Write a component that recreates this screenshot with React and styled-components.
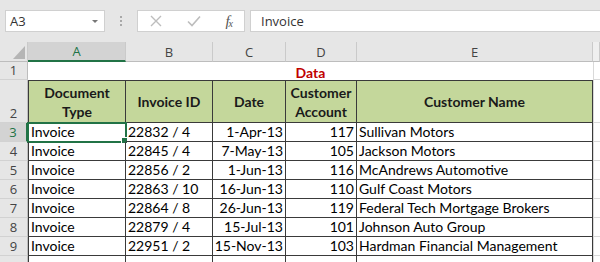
import React from "react";
import styled, { createGlobalStyle } from "styled-components";

const GlobalStyle = createGlobalStyle`
  html, body {
    margin: 0;
    padding: 0;
    background: #ffffff;
  }
  body {
    font-family: "Lato", "Liberation Sans", sans-serif;
  }
`;

const columns = ["A", "B", "C", "D", "E"];

const rows = [
  { n: 3, type: "Invoice", id: "22832 / 4", date: "1-Apr-13", acct: 117, name: "Sullivan Motors" },
  { n: 4, type: "Invoice", id: "22845 / 4", date: "7-May-13", acct: 105, name: "Jackson Motors" },
  { n: 5, type: "Invoice", id: "22856 / 2", date: "1-Jun-13", acct: 116, name: "McAndrews Automotive" },
  { n: 6, type: "Invoice", id: "22863 / 10", date: "16-Jun-13", acct: 110, name: "Gulf Coast Motors" },
  { n: 7, type: "Invoice", id: "22864 / 8", date: "26-Jun-13", acct: 119, name: "Federal Tech Mortgage Brokers" },
  { n: 8, type: "Invoice", id: "22879 / 4", date: "15-Jul-13", acct: 101, name: "Johnson Auto Group" },
  { n: 9, type: "Invoice", id: "22951 / 2", date: "15-Nov-13", acct: 103, name: "Hardman Financial Management" },
];

const App = () => {
  return (
    <>
      <GlobalStyle />
      <Window>
        <FormulaBar>
          <NameBox>
            <span>A3</span>
            <DropArrow />
          </NameBox>
          <Grip>
            <i />
            <i />
            <i />
          </Grip>
          <FxButtons>
            <svg width="12" height="12" viewBox="0 0 12 12">
              <path d="M1 1 L11 11 M11 1 L1 11" stroke="#bdbdbd" strokeWidth="1.4" fill="none" />
            </svg>
            <svg width="14" height="12" viewBox="0 0 14 12">
              <path d="M1 6.5 L5 10.5 L13 1.5" stroke="#bdbdbd" strokeWidth="1.6" fill="none" />
            </svg>
            <FxLabel>
              f<sub>x</sub>
            </FxLabel>
          </FxButtons>
          <FormulaInput>Invoice</FormulaInput>
        </FormulaBar>

        <Sheet>
          <Corner>
            <svg width="12" height="13" viewBox="0 0 12 13">
              <path d="M12 0 L12 13 L0 13 Z" fill="#b5b5b5" />
            </svg>
          </Corner>
          {columns.map((c) => (
            <ColHead key={c} $active={c === "A"}>{c}</ColHead>
          ))}
          <ColHead $faint />

          <RowHead>1</RowHead>
          <TitleCell>Data</TitleCell>
          <BlankCell />

          <RowHead>2</RowHead>
          <HeadCell $first>Document<br />Type</HeadCell>
          <HeadCell>Invoice ID</HeadCell>
          <HeadCell>Date</HeadCell>
          <HeadCell>Customer<br />Account</HeadCell>
          <HeadCell>Customer Name</HeadCell>
          <BlankCell />

          {rows.map((r) => (
            <React.Fragment key={r.n}>
              <RowHead $active={r.n === 3}>{r.n}</RowHead>
              <Cell $first $selected={r.n === 3}>
                {r.type}
                {r.n === 3 && <FillHandle />}
              </Cell>
              <Cell>{r.id}</Cell>
              <Cell $right>{r.date}</Cell>
              <Cell $right>{r.acct}</Cell>
              <Cell>{r.name}</Cell>
              <BlankCell />
            </React.Fragment>
          ))}

          {/* row 10 is only a sliver at the bottom edge */}
          <RowHead />
          <Cell $first />
          <Cell />
          <Cell />
          <Cell />
          <Cell />
          <BlankCell />
        </Sheet>
      </Window>
    </>
  );
};

export default App;

const Window = styled.div`
  width: 600px;
  height: 262px;
  overflow: hidden;
  background: #ffffff;
`;

const FormulaBar = styled.div`
  height: 42px;
  box-sizing: border-box;
  padding: 10px 0 10px 5px;
  background: #e6e6e6;
  display: flex;
  align-items: stretch;
`;

const NameBox = styled.div`
  width: 100px;
  box-sizing: border-box;
  background: #ffffff;
  border: 1px solid #d0d0d0;
  display: flex;
  align-items: center;
  justify-content: space-between;
  padding: 0 6px 0 4px;
  font-family: "Open Sans", "Liberation Sans", sans-serif;
  font-size: 13px;
  color: #333333;
`;

const DropArrow = styled.span`
  width: 0;
  height: 0;
  border-left: 3px solid transparent;
  border-right: 3px solid transparent;
  border-top: 3px solid #777777;
`;

const Grip = styled.div`
  width: 32px;
  display: flex;
  flex-direction: column;
  align-items: center;
  justify-content: center;
  gap: 2px;

  i {
    width: 2px;
    height: 2px;
    background: #a8a8a8;
  }
`;

const FxButtons = styled.div`
  width: 108px;
  box-sizing: border-box;
  background: #ffffff;
  border: 1px solid #d0d0d0;
  display: flex;
  align-items: center;
  justify-content: space-between;
  padding: 0 12px 0 12px;
`;

const FxLabel = styled.span`
  font-family: "Liberation Serif", serif;
  font-style: italic;
  font-size: 15px;
  color: #555555;
  letter-spacing: -1px;

  sub {
    font-size: 10px;
    vertical-align: -1px;
  }
`;

const FormulaInput = styled.div`
  flex: 1;
  margin-left: 5px;
  background: #ffffff;
  border: 1px solid #d0d0d0;
  border-right: none;
  display: flex;
  align-items: center;
  padding-left: 10px;
  font-family: "Open Sans", "Liberation Sans", sans-serif;
  font-size: 13px;
  color: #333333;
`;

const Sheet = styled.div`
  display: grid;
  grid-template-columns: 28px 98px 87px 73px 71px 236px 7px;
  grid-template-rows: 20px 18px 43px repeat(8, 19px);
  font-family: "Lato", "Liberation Sans", sans-serif;
  font-size: 14px;
  color: #000000;
`;

const Corner = styled.div`
  background: #e6e6e6;
  border-right: 1px solid #cacaca;
  border-bottom: 1px solid #bdbdbd;
  box-sizing: border-box;
  display: flex;
  align-items: flex-end;
  justify-content: flex-end;
  padding: 0 2px 2px 0;
`;

const ColHead = styled.div`
  box-sizing: border-box;
  background: ${({ $active, $faint }) => ($active ? "#d3d3d3" : $faint ? "#efefef" : "#e6e6e6")};
  color: ${({ $active }) => ($active ? "#217346" : "#444444")};
  border-right: 1px solid #cacaca;
  border-bottom: ${({ $active }) => ($active ? "2px solid #217346" : "1px solid #bdbdbd")};
  display: flex;
  align-items: center;
  justify-content: center;
  font-family: "Open Sans", "Liberation Sans", sans-serif;
  font-size: 13px;
`;

const RowHead = styled.div`
  box-sizing: border-box;
  background: ${({ $active }) => ($active ? "#d3d3d3" : "#e6e6e6")};
  color: ${({ $active }) => ($active ? "#217346" : "#444444")};
  border-right: ${({ $active }) => ($active ? "2px solid #217346" : "1px solid #bdbdbd")};
  border-bottom: 1px solid #d2d2d2;
  display: flex;
  align-items: flex-end;
  justify-content: center;
  font-family: "Open Sans", "Liberation Sans", sans-serif;
  font-size: 13px;
  line-height: 18px;
`;

const TitleCell = styled.div`
  grid-column: span 5;
  display: flex;
  align-items: center;
  justify-content: center;
  color: #c00000;
  font-weight: 700;
  padding-top: 2px;
`;

const BlankCell = styled.div`
  box-sizing: border-box;
  border-left: 1px solid #d9d9d9;
  border-bottom: 1px solid #d9d9d9;
`;

const HeadCell = styled.div`
  box-sizing: border-box;
  background: #c4d79b;
  border-top: 1px solid #3a3a3a;
  border-right: 1px solid #3a3a3a;
  border-bottom: 1px solid #3a3a3a;
  border-left: ${({ $first }) => ($first ? "1px solid #3a3a3a" : "none")};
  display: flex;
  align-items: center;
  justify-content: center;
  text-align: center;
  font-weight: 700;
  line-height: 19px;
  color: #1a1a1a;
`;

const Cell = styled.div`
  position: relative;
  box-sizing: border-box;
  border-right: 1px solid #3a3a3a;
  border-bottom: 1px solid #3a3a3a;
  border-left: ${({ $first }) => ($first ? "1px solid #3a3a3a" : "none")};
  outline: ${({ $selected }) => ($selected ? "2px solid #217346" : "none")};
  outline-offset: -1px;
  display: flex;
  align-items: center;
  justify-content: ${({ $right }) => ($right ? "flex-end" : "flex-start")};
  padding: 0 2px 0 2px;
  white-space: nowrap;
  line-height: 18px;
`;

const FillHandle = styled.span`
  position: absolute;
  right: -3px;
  bottom: -3px;
  width: 5px;
  height: 5px;
  background: #217346;
  border: 1px solid #ffffff;
`;
